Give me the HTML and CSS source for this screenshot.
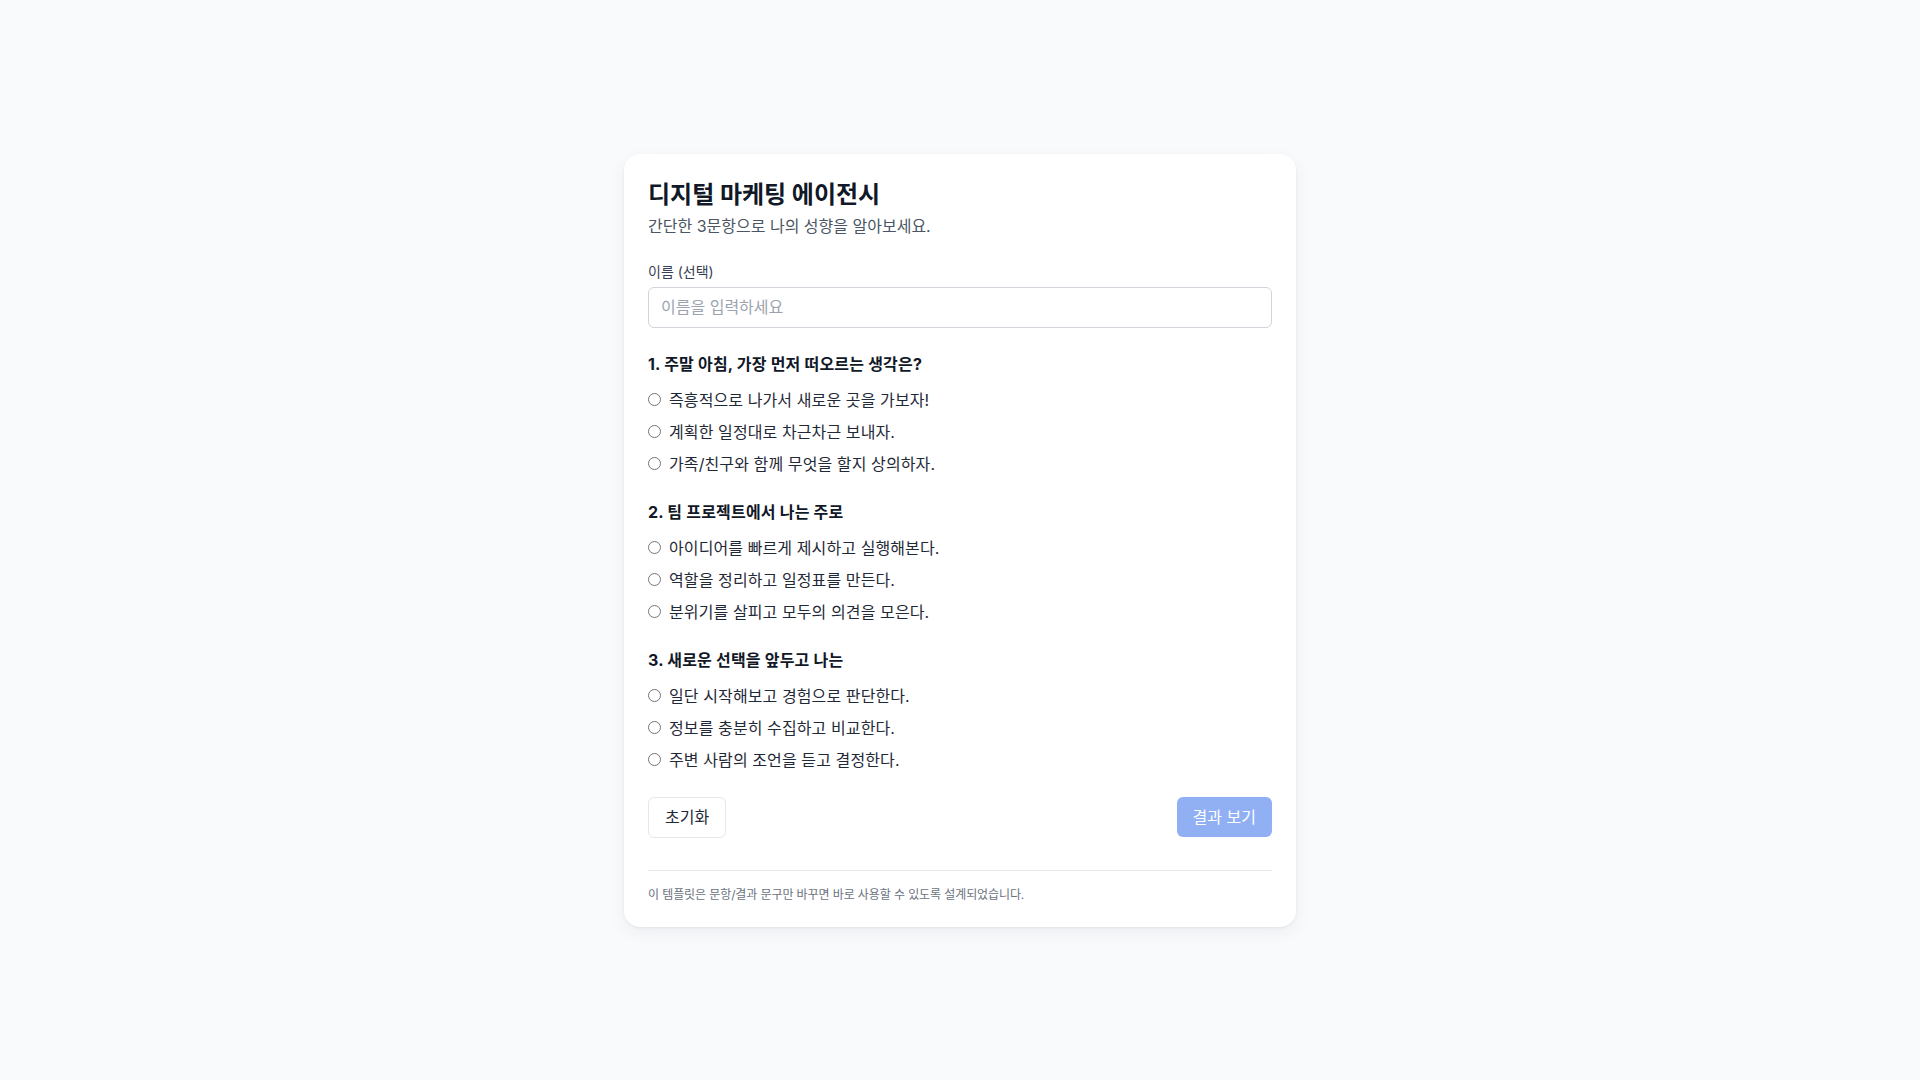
FILE: index.html
```html
<!DOCTYPE html>
<html lang="ko">
<head>
    <meta charset="UTF-8">
    <meta name="viewport" content="width=device-width, initial-scale=1.0">
    <title>디지털 마케팅 에이전시</title>
    <link rel="stylesheet" href="styles.css">
</head>
<body>
    <main class="card">
        <h1 class="title">디지털 마케팅 에이전시</h1>
        <p class="subtitle">간단한 3문항으로 나의 성향을 알아보세요.</p>

        <div class="field">
            <label class="field-label" for="userName">이름 (선택)</label>
            <input type="text" id="userName" class="text-input" placeholder="이름을 입력하세요">
        </div>

        <fieldset class="question">
            <legend class="question-title">1. 주말 아침, 가장 먼저 떠오르는 생각은?</legend>
            <label class="option"><input type="radio" name="q1" value="a"><span>즉흥적으로 나가서 새로운 곳을 가보자!</span></label>
            <label class="option"><input type="radio" name="q1" value="b"><span>계획한 일정대로 차근차근 보내자.</span></label>
            <label class="option"><input type="radio" name="q1" value="c"><span>가족/친구와 함께 무엇을 할지 상의하자.</span></label>
        </fieldset>

        <fieldset class="question">
            <legend class="question-title">2. 팀 프로젝트에서 나는 주로</legend>
            <label class="option"><input type="radio" name="q2" value="a"><span>아이디어를 빠르게 제시하고 실행해본다.</span></label>
            <label class="option"><input type="radio" name="q2" value="b"><span>역할을 정리하고 일정표를 만든다.</span></label>
            <label class="option"><input type="radio" name="q2" value="c"><span>분위기를 살피고 모두의 의견을 모은다.</span></label>
        </fieldset>

        <fieldset class="question">
            <legend class="question-title">3. 새로운 선택을 앞두고 나는</legend>
            <label class="option"><input type="radio" name="q3" value="a"><span>일단 시작해보고 경험으로 판단한다.</span></label>
            <label class="option"><input type="radio" name="q3" value="b"><span>정보를 충분히 수집하고 비교한다.</span></label>
            <label class="option"><input type="radio" name="q3" value="c"><span>주변 사람의 조언을 듣고 결정한다.</span></label>
        </fieldset>

        <div class="actions">
            <button type="button" class="btn btn-reset">초기화</button>
            <button type="button" class="btn btn-submit" disabled>결과 보기</button>
        </div>

        <p class="footnote">이 템플릿은 문항/결과 문구만 바꾸면 바로 사용할 수 있도록 설계되었습니다.</p>
    </main>
</body>
</html>
```

FILE: styles.css
```css
body {
    margin: 0;
    min-height: 100vh;
    display: flex;
    align-items: center;
    justify-content: center;
    background: #f8fafc;
    font-family: 'Inter', 'Noto Sans CJK KR', sans-serif;
    color: #111827;
}

.card {
    width: 672px;
    box-sizing: border-box;
    padding: 24px;
    background: #ffffff;
    border-radius: 16px;
    box-shadow: 0 1px 3px rgba(15, 23, 42, 0.06), 0 6px 18px rgba(15, 23, 42, 0.05);
}

.title {
    margin: 1px 0 0;
    font-size: 24px;
    line-height: 32px;
    font-weight: 700;
    color: #111827;
}

.subtitle {
    margin: 3px 0 0;
    font-size: 16px;
    line-height: 24px;
    color: #4b5563;
}

.field {
    margin-top: 24px;
}

.field-label {
    display: block;
    margin-bottom: 5px;
    font-size: 14px;
    line-height: 20px;
    color: #374151;
}

.text-input {
    display: block;
    width: 100%;
    height: 41px;
    box-sizing: border-box;
    padding: 0 12px;
    font-family: inherit;
    font-size: 16px;
    color: #111827;
    border: 1px solid #d1d5db;
    border-radius: 6px;
    outline: none;
}

.text-input::placeholder {
    color: #9ca3af;
}

.question {
    margin: 24px 0 0;
    padding: 0;
    border: none;
    display: flex;
    flex-direction: column;
    gap: 8px;
}

.question-title {
    padding: 0;
    margin-bottom: 12px;
    font-size: 16px;
    line-height: 24px;
    font-weight: 700;
    letter-spacing: 0.2px;
    color: #111827;
}

.option {
    display: flex;
    align-items: center;
    gap: 8px;
    font-size: 16px;
    line-height: 24px;
    color: #1f2937;
    letter-spacing: 0.1px;
    cursor: pointer;
}

.option input {
    margin: 0;
    width: 13px;
    height: 13px;
}

.actions {
    margin-top: 25px;
    display: flex;
    justify-content: space-between;
    align-items: center;
}

.btn {
    font-family: inherit;
    font-size: 16px;
    line-height: 24px;
    padding: 8px 16px;
    border-radius: 6px;
    cursor: pointer;
}

.btn-reset {
    background: #ffffff;
    color: #1f2937;
    border: 1px solid #e5e7eb;
    line-height: 23px;
}

.btn-submit {
    background: #2563eb;
    color: #ffffff;
    border: none;
}

.btn-submit:disabled {
    opacity: 0.5;
    cursor: not-allowed;
}

.footnote {
    margin: 32px 0 0;
    padding-top: 16px;
    border-top: 1px solid #e5e7eb;
    font-size: 12px;
    line-height: 16px;
    letter-spacing: -0.1px;
    color: #6b7280;
}
```
